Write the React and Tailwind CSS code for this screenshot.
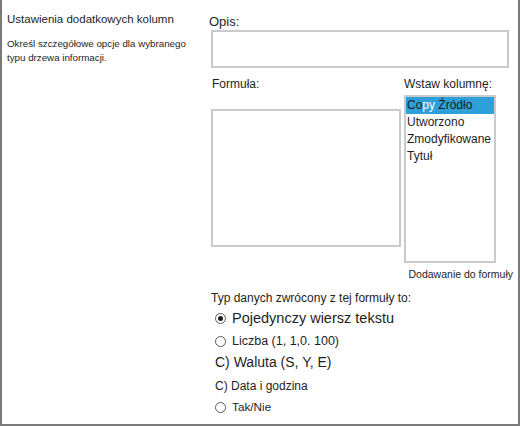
const columns = ['Utworzono', 'Zmodyfikowane', 'Tytuł'];

const Radio = ({ checked }) => (
  <span className="flex h-[11px] w-[11px] shrink-0 items-center justify-center rounded-full border border-[#5a5a5a] bg-white">
    {checked && <span className="h-[5px] w-[5px] rounded-full bg-[#1a1a1a]" />}
  </span>
);

export default function App() {
  return (
    <div
      className="flex h-[426px] w-[520px] border-x-2 border-b-2 border-[#7a7a7a] bg-white text-[#1e1e1e]"
      style={{ fontFamily: '"Liberation Sans", Arial, sans-serif' }}
    >
      {/* section description */}
      <div className="w-[207px] shrink-0 pl-[5px] pt-[12px]">
        <h2 className="text-[11.5px] leading-[14px]">Ustawienia dodatkowych kolumn</h2>
        <p className="mt-[11px] text-[9.75px] leading-[14px]">
          Określ szczegółowe opcje dla wybranego
          <br />
          typu drzewa informacji.
        </p>
      </div>

      {/* form fields */}
      <div className="flex flex-1 flex-col pt-[14px]">
        <label className="text-[13px] leading-[16px]">Opis:</label>
        <div className="ml-[2px] h-[38px] w-[298px] border-2 border-[#cacaca]" />

        <div className="mt-[9px] flex">
          <div className="ml-[2px] flex w-[190px] flex-col">
            <span className="pl-[1px] text-[12px] leading-[15px]">Formuła:</span>
            <div className="mt-[17px] h-[138px] w-[190px] border-2 border-[#cacaca]" />
          </div>
          <div className="ml-[3px] flex flex-col">
            <span className="text-[12px] leading-[15px]">Wstaw kolumnę:</span>
            <div className="mt-[3px] h-[168px] w-[92px] border-2 border-[#cacaca] text-[12px] leading-[17px]">
              <div className="bg-[#2d9fd9] pl-[1px]">
                Co<span className="text-white">py</span> Źródło
              </div>
              {columns.map((c) => (
                <div key={c} className="pl-[1px]">
                  {c}
                </div>
              ))}
            </div>
          </div>
        </div>

        <div className="mt-[5px] pr-[5px] text-right text-[10.5px] leading-[13px]">Dodawanie do formuły</div>

        <div className="mt-[10px] pl-[2px] text-[12px] leading-[14px]">Typ danych zwrócony z tej formuły to:</div>

        <div className="ml-[6px] mt-[4px] flex items-center gap-[6px] text-[14.5px] leading-[18px]">
          <Radio checked />
          <span>Pojedynczy wiersz tekstu</span>
        </div>
        <div className="ml-[6px] mt-[6px] flex items-center gap-[6px] text-[12.5px] leading-[16px]">
          <Radio />
          <span>Liczba (1, 1,0. 100)</span>
        </div>
        <div className="ml-[6px] mt-[4px] text-[14px] leading-[18px]">C) Waluta (S, Y, E)</div>
        <div className="ml-[6px] mt-[7px] text-[12px] leading-[16px]">C) Data i godzina</div>
        <div className="ml-[6px] mt-[5px] flex items-center gap-[6px] text-[11.75px] leading-[16px]">
          <Radio />
          <span>Tak/Nie</span>
        </div>
      </div>
    </div>
  );
}
